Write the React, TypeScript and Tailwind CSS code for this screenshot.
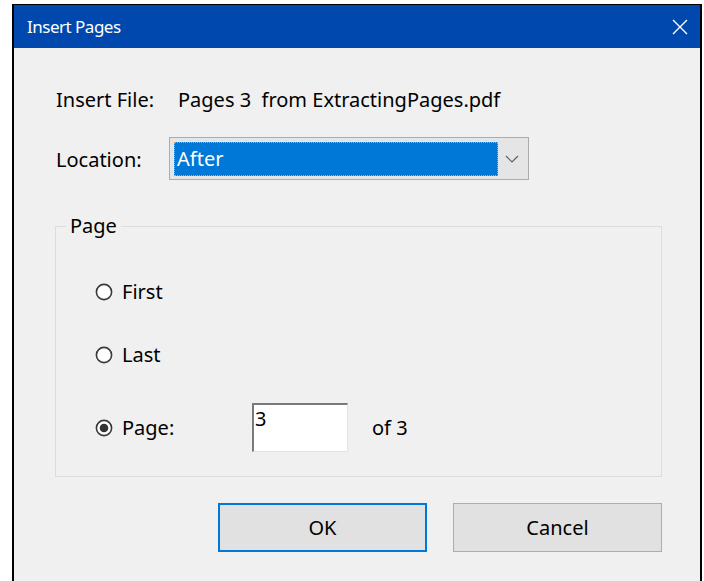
import { useState } from "react";

type RadioProps = {
	label: string;
	checked: boolean;
	onSelect: () => void;
};

function Radio({ label, checked, onSelect }: RadioProps) {
	return (
		<button type="button" onClick={onSelect} className="flex items-center gap-[9px] h-[30px]">
			<svg width="18" height="18" viewBox="0 0 18 18" className="shrink-0">
				<circle cx="9" cy="9" r="7.6" fill="#ffffff" stroke="#3a3a3a" strokeWidth="1.6" />
				{checked && <circle cx="9" cy="9" r="4.3" fill="#333333" />}
			</svg>
			<span className="text-[20px] text-black leading-none">{label}</span>
		</button>
	);
}

export default function App() {
	const [where, setWhere] = useState<"first" | "last" | "page">("page");

	return (
		<div className="w-[704px] h-[581px] bg-white overflow-hidden" style={{ fontFamily: '"Noto Sans", "Open Sans", sans-serif' }}>
			{/* Dialog window */}
			<div className="ml-[12px] mt-[4px] w-[690px] h-[577px] border-l-2 border-r-2 border-t border-black flex flex-col">
				{/* Title bar */}
				<div className="h-[43px] bg-[#0048ad] flex items-center justify-between pl-[13px] pr-[11px]">
					<span className="text-white text-[17px] tracking-[-0.5px]">Insert Pages</span>
					<svg width="18" height="18" viewBox="0 0 18 18" className="text-white">
						<path d="M2 2 L16 16 M16 2 L2 16" stroke="currentColor" strokeWidth="1.4" fill="none" />
					</svg>
				</div>

				{/* Body */}
				<div className="flex-1 bg-[#f0f0f0] pl-[41px] text-black">
					<div className="mt-[37px] h-[30px] flex items-center pl-[1px] text-[20px]">
						<span className="w-[122px]">Insert File:</span>
						<span>Pages 3&nbsp; from ExtractingPages.pdf</span>
					</div>

					<div className="mt-[22px] h-[43px] flex items-center pl-[1px]">
						<span className="w-[113px] text-[20px] pt-[3px]">Location:</span>
						<div className="w-[360px] h-[43px] border border-[#acacac] bg-[#e5e5e5] flex items-center pl-[4px] pr-[9px]">
							<div className="w-[324px] h-[34px] bg-[#0078d7] border border-dotted border-[#f0a040] flex items-center pl-[2px]">
								<span className="text-white text-[20px]">After</span>
							</div>
							<svg width="14" height="8" viewBox="0 0 14 8" className="ml-auto">
								<path d="M1 1 L7 7 L13 1" stroke="#606060" strokeWidth="1.2" fill="none" />
							</svg>
						</div>
					</div>

					{/* Page group */}
					<fieldset className="mt-[32px] w-[607px] border border-[#dcdcdc] pb-[24px]">
						<legend className="ml-[10px] px-[4px] text-[20px] leading-[28px]">Page</legend>
						<div className="pl-[39px]">
							<div className="mt-[37px]">
								<Radio label="First" checked={where === "first"} onSelect={() => setWhere("first")} />
							</div>
							<div className="mt-[33px]">
								<Radio label="Last" checked={where === "last"} onSelect={() => setWhere("last")} />
							</div>
							<div className="mt-[33px] h-[49px] flex items-center">
								<div className="w-[157px]">
									<Radio label="Page:" checked={where === "page"} onSelect={() => setWhere("page")} />
								</div>
								<div className="w-[96px] h-[49px] bg-white border-t-2 border-l-2 border-[#7a7a7a] border-r border-b border-r-[#e3e3e3] border-b-[#e3e3e3] pl-[1px] text-[20px] leading-[28px]">
									3
								</div>
								<span className="ml-[24px] text-[20px]">of 3</span>
							</div>
						</div>
					</fieldset>

					{/* Buttons */}
					<div className="mt-[26px] w-[607px] flex justify-end gap-[26px]">
						<button className="w-[209px] h-[49px] bg-[#e1e1e1] border-2 border-[#0078d7] text-[20px]">OK</button>
						<button className="w-[209px] h-[49px] bg-[#e1e1e1] border border-[#adadad] text-[20px]">Cancel</button>
					</div>
				</div>
			</div>
		</div>
	);
}
